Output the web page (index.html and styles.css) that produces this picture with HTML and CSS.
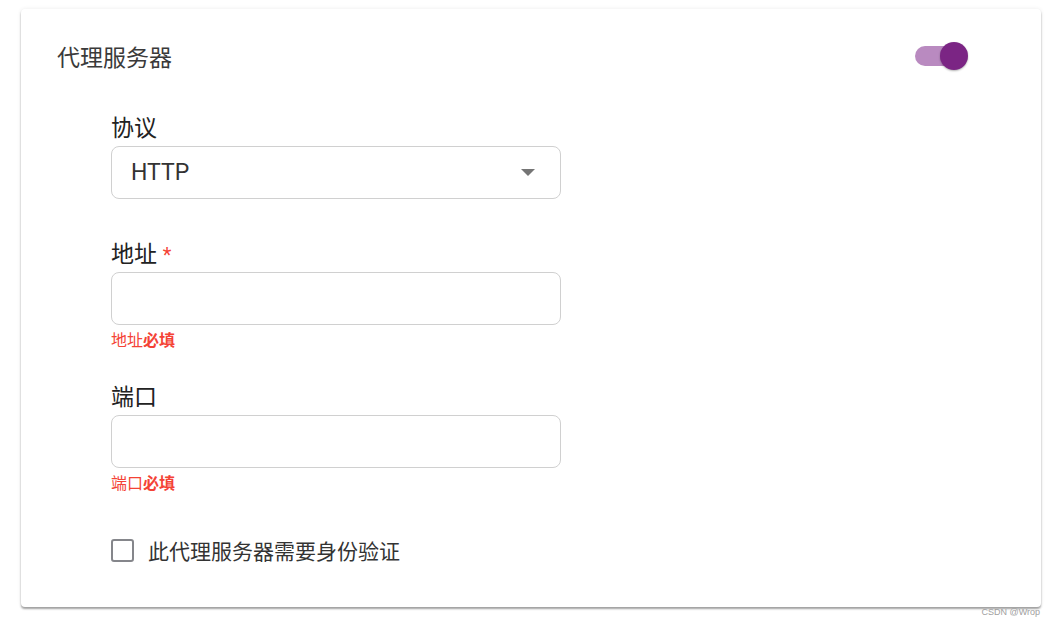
FILE: index.html
```html
<!DOCTYPE html>
<html lang="zh">
<head>
    <meta charset="UTF-8">
    <title>代理服务器</title>
    <link rel="stylesheet" href="styles.css">
</head>
<body>
    <!-- Карточка настроек прокси -->
    <div class="proxy-card">
        <div class="proxy-header">
            <div class="proxy-title">代理服务器</div>
            <div class="switch on">
                <span class="switch-track"></span>
                <span class="switch-thumb"></span>
            </div>
        </div>

        <div class="proxy-form">
            <div class="field field-select">
                <div class="field-label">协议</div>
                <div class="field-box select-box">
                    <span class="select-value">HTTP</span>
                    <span class="select-arrow"></span>
                </div>
            </div>

            <div class="field">
                <div class="field-label">地址 <span class="required">*</span></div>
                <div class="field-box"></div>
                <div class="field-error">地址<b>必填</b></div>
            </div>

            <div class="field">
                <div class="field-label">端口</div>
                <div class="field-box"></div>
                <div class="field-error">端口<b>必填</b></div>
            </div>

            <label class="check-row">
                <span class="check-box"></span>
                <span class="check-text">此代理服务器需要身份验证</span>
            </label>
        </div>
    </div>

    <div class="watermark">CSDN @Wrop</div>
</body>
</html>
```

FILE: styles.css
```css
body {
    margin: 0;
    background: #ffffff;
    color: #333333;
    font-family: Roboto, "Noto Sans CJK SC", sans-serif;
}

/* Карточка */
.proxy-card {
    width: 1020px;
    height: 598px;
    box-sizing: border-box;
    margin: 9px 0 0 21px;
    padding: 30px 73px 0 36px;
    background: #ffffff;
    border-radius: 4px;
    box-shadow: 0 2px 2px rgba(0, 0, 0, 0.35), 0 0 4px rgba(0, 0, 0, 0.08);
}

.proxy-header {
    height: 40px;
    display: flex;
    align-items: center;
    justify-content: space-between;
}

.proxy-title {
    font-size: 23px;
    line-height: 40px;
    color: #3a3a3a;
}

/* Переключатель */
.switch {
    position: relative;
    width: 53px;
    height: 40px;
    margin-top: -6px;
}

.switch-track {
    position: absolute;
    left: 0;
    top: 10px;
    width: 46px;
    height: 20px;
    border-radius: 10px;
    background: #b98ac0;
}

.switch-thumb {
    position: absolute;
    left: 25px;
    top: 6px;
    width: 28px;
    height: 28px;
    border-radius: 50%;
    background: #7b2584;
    box-shadow: 0 1px 2px rgba(0, 0, 0, 0.3);
}

/* Форма */
.proxy-form {
    margin: 35px 0 0 54px;
    width: 450px;
}

.field {
    margin-bottom: 32px;
}

.field-select {
    margin-bottom: 41px;
}

.field-label {
    font-size: 23px;
    line-height: 30px;
    color: #222222;
    margin-bottom: 2px;
}

.field-select .field-label {
    margin-bottom: 2px;
}

.required {
    color: #f44336;
    font-size: 20px;
}

.field-box {
    height: 53px;
    box-sizing: border-box;
    border: 1px solid #d0d0d0;
    border-radius: 8px;
    background: #ffffff;
}

.select-box {
    display: flex;
    align-items: center;
    justify-content: space-between;
    padding: 0 25px 0 19px;
}

.select-value {
    font-size: 23px;
    color: #333333;
}

.select-arrow {
    width: 0;
    height: 0;
    border-left: 7px solid transparent;
    border-right: 7px solid transparent;
    border-top: 7px solid #757575;
}

.field-error {
    margin-top: 6px;
    font-size: 16px;
    line-height: 20px;
    color: #f44336;
}

.field-error b {
    font-weight: bold;
}

/* Чекбокс */
.check-row {
    display: flex;
    align-items: center;
    gap: 14px;
    height: 30px;
    margin-top: 41px;
}

.check-box {
    width: 23px;
    height: 23px;
    box-sizing: border-box;
    border: 2.5px solid #85868b;
    border-radius: 3px;
}

.check-text {
    font-size: 21px;
    color: #333333;
}

.watermark {
    text-align: right;
    padding-right: 15px;
    font-family: "Liberation Sans", Arial, sans-serif;
    font-size: 9px;
    line-height: 11px;
    color: #a0a0a0;
}
```
